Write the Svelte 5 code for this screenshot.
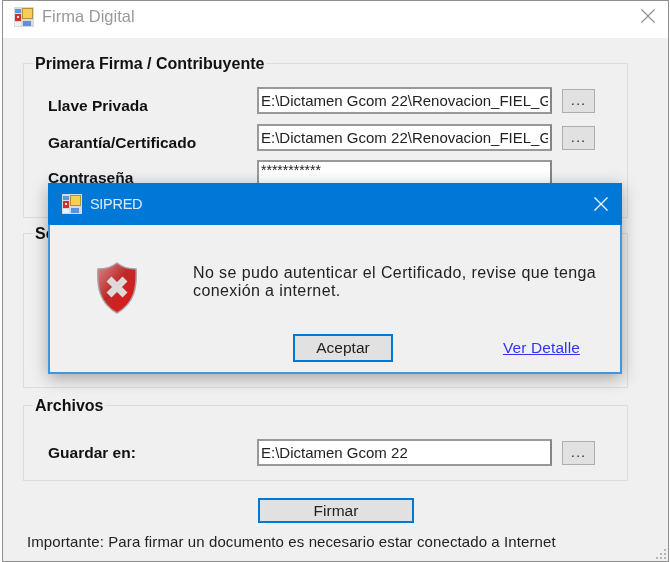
<script lang="ts">
  const basePath = 'E:\\Dictamen Gcom 22';
  const fielPath = basePath + '\\Renovacion_FIEL_Gcom22';

  const firstRows = [
    { label: 'Llave Privada', value: fielPath, browse: true },
    { label: 'Garantía/Certificado', value: fielPath, browse: true },
    { label: 'Contraseña', value: '***********', browse: false },
  ];
</script>

{#snippet appIcon()}
  <svg class="app-icon" viewBox="0 0 20 20" aria-hidden="true">
    <rect x="0" y="0" width="20" height="20" fill="#d5dbe2" />
    <rect x="1" y="2" width="6" height="4" fill="#5b9bd5" />
    <rect x="1" y="7" width="6" height="7" fill="#cf3030" />
    <rect x="3" y="9" width="2" height="2" fill="#f4e3e3" />
    <rect x="8" y="1" width="11" height="11" fill="#b58f3a" />
    <rect x="9" y="2" width="9" height="9" fill="#f8cf55" />
    <rect x="9" y="14" width="8" height="5" fill="#5f8fe0" />
    <rect x="1" y="15" width="6" height="4" fill="#eef1f4" />
  </svg>
{/snippet}

<div class="window">
  <header class="titlebar">
    {@render appIcon()}
    <span class="title">Firma Digital</span>
    <svg class="close" viewBox="0 0 14 14" aria-hidden="true">
      <path d="M0.5 0.5 13.5 13.5M13.5 0.5 0.5 13.5" />
    </svg>
  </header>

  <main class="body">
    <fieldset class="group first">
      <legend>Primera Firma / Contribuyente</legend>
      <div class="rows">
        {#each firstRows as row}
          <label class="name" class:short={!row.browse} for={row.label}>{row.label}</label>
          <input id={row.label} class="field" class:secret={!row.browse} readonly value={row.value} />
          {#if row.browse}
            <button class="browse">...</button>
          {:else}
            <span></span>
          {/if}
        {/each}
      </div>
    </fieldset>

    <fieldset class="group second">
      <legend>Segunda Firma</legend>
    </fieldset>

    <fieldset class="group third">
      <legend>Archivos</legend>
      <div class="rows">
        <label class="name flat" for="guardar">Guardar en:</label>
        <input id="guardar" class="field" readonly value={basePath} />
        <button class="browse">...</button>
      </div>
    </fieldset>

    <button class="primary sign">Firmar</button>
    <p class="note">Importante: Para firmar un documento es necesario estar conectado a Internet</p>
  </main>

  <svg class="grip" viewBox="0 0 12 12" aria-hidden="true">
    <path d="M9 1h2v2H9zM5 5h2v2H5zM9 5h2v2H9zM1 9h2v2H1zM5 9h2v2H5zM9 9h2v2H9z" />
  </svg>

  <section class="dialog">
    <header class="dialog-bar">
      {@render appIcon()}
      <span class="dialog-title">SIPRED</span>
      <svg class="dialog-close" viewBox="0 0 14 14" aria-hidden="true">
        <path d="M0.5 0.5 13.5 13.5M13.5 0.5 0.5 13.5" />
      </svg>
    </header>
    <div class="message">
      <svg class="shield" viewBox="0 0 42 52" aria-hidden="true">
        <defs>
          <linearGradient id="shieldFill" x1="0" y1="0" x2="1" y2="1">
            <stop offset="0" stop-color="#d98c8c" />
            <stop offset="0.45" stop-color="#bd2a2a" />
            <stop offset="0.75" stop-color="#d81c1c" />
            <stop offset="1" stop-color="#861212" />
          </linearGradient>
        </defs>
        <path
          d="M20 1C15 5 8 7 1 7 0 24 2 41 20 51 38 41 40 24 39 7 32 7 25 5 20 1Z"
          fill="url(#shieldFill)"
          stroke="#a9a0a0"
          stroke-width="1.5"
        />
        <path d="M12 17 28 33M28 17 12 33" stroke="#dedada" stroke-width="7" />
      </svg>
      <p class="message-text">No se pudo autenticar el Certificado, revise que tenga conexión a internet.</p>
    </div>
    <div class="actions">
      <button class="primary accept">Aceptar</button>
      <a class="detail" href="#detalle">Ver Detalle</a>
    </div>
  </section>
</div>

<style>
  :global(body) {
    margin: 0;
    background: #fff;
  }

  .window {
    position: relative;
    box-sizing: border-box;
    width: 667px;
    height: 562px;
    margin-left: 2px;
    border: 1px solid #8f8f8f;
    background: #f0f0f0;
    font-family: 'Liberation Sans', Arial, sans-serif;
    font-size: 15.5px;
    color: #222;
    overflow: hidden;
    filter: blur(0.4px);
  }

  .titlebar {
    display: flex;
    align-items: center;
    box-sizing: border-box;
    height: 37px;
    padding: 0 13px 6px 11px;
    background: #fff;
  }

  .app-icon {
    flex: none;
    width: 20px;
    height: 20px;
  }

  .title {
    margin-left: 8px;
    font-size: 16.5px;
    color: #9a9a9a;
  }

  .close {
    width: 14px;
    height: 14px;
    margin: -2px 0 0 auto;
    fill: none;
    stroke: #8c8c8c;
    stroke-width: 1.1;
  }

  .body {
    display: flex;
    flex-direction: column;
    padding: 15px 40px 0 20px;
  }

  .group {
    box-sizing: border-box;
    min-width: 0;
    width: 605px;
    margin: 0;
    padding: 14px 0 0 24px;
    border: 1px solid #dcdcdc;
  }

  .first {
    height: 165px;
  }

  .second {
    height: 165px;
    margin-top: 5px;
  }

  .third {
    height: 86px;
    margin-top: 7px;
    padding-top: 24px;
  }

  legend {
    margin-left: -15px;
    padding: 2px 2px 0;
    font-size: 16px;
    line-height: 18px;
    font-weight: bold;
    color: #111;
  }

  .rows {
    display: grid;
    grid-template-columns: 199px 295px 33px;
    column-gap: 10px;
    row-gap: 10px;
    align-items: center;
  }

  .name {
    margin: 5px 0 -5px;
    line-height: 18px;
    font-weight: bold;
    color: #111;
  }

  .name.short {
    margin: 3px 0 -3px;
  }

  .name.flat {
    margin: 0;
  }

  .field {
    box-sizing: border-box;
    width: 100%;
    height: 27px;
    padding: 0 2px 1px;
    border: 2px solid #999;
    border-right-color: #858585;
    background: #fff;
    font: 15px/18px 'Liberation Sans', Arial, sans-serif;
    color: #222;
    outline: none;
  }

  .secret {
    height: 28px;
    margin-top: -1px;
    padding-bottom: 9px;
    font-size: 14px;
  }

  .browse {
    box-sizing: border-box;
    height: 24px;
    padding: 0 0 2px;
    border: 1px solid #adadad;
    background: #e1e1e1;
    font: 15px 'Liberation Sans', Arial, sans-serif;
    letter-spacing: 1px;
    color: #333;
  }

  .primary {
    box-sizing: border-box;
    border: 2px solid #0078d7;
    background: #e1e1e1;
    font: 15.5px 'Liberation Sans', Arial, sans-serif;
    color: #222;
  }

  .sign {
    align-self: flex-start;
    width: 156px;
    height: 25px;
    margin: 17px 0 0 235px;
  }

  .note {
    margin: 10px 0 0 4px;
    font-size: 15px;
    line-height: 18px;
    letter-spacing: 0.1px;
    white-space: nowrap;
    color: #222;
  }

  .grip {
    position: absolute;
    right: 1px;
    bottom: 1px;
    width: 12px;
    height: 12px;
    fill: #b5b5b5;
  }

  .dialog {
    position: absolute;
    left: 45px;
    top: 182px;
    box-sizing: border-box;
    width: 574px;
    height: 191px;
    border: 2px solid #3b97e3;
    border-top: none;
    background: #f0f0f0;
    box-shadow: 0 4px 16px rgba(0, 0, 0, 0.32);
  }

  .dialog-bar {
    display: flex;
    align-items: center;
    height: 42px;
    margin: 0 -2px;
    padding: 0 14px 0 14px;
    background: #0078d7;
  }

  .dialog-title {
    margin-left: 8px;
    font-size: 14.5px;
    letter-spacing: -0.3px;
    color: #d8ecfb;
  }

  .dialog-close {
    width: 14px;
    height: 14px;
    margin-left: auto;
    fill: none;
    stroke: #fff;
    stroke-width: 1.2;
  }

  .message {
    display: flex;
    align-items: flex-start;
    padding: 38px 20px 0 47px;
  }

  .shield {
    flex: none;
    width: 42px;
    height: 52px;
    margin-top: -1px;
  }

  .message-text {
    margin: 0 0 0 54px;
    padding-top: 1px;
    width: 420px;
    font-size: 16px;
    line-height: 18px;
    letter-spacing: 0.4px;
    color: #222;
  }

  .actions {
    display: flex;
    align-items: flex-start;
    margin-top: 20px;
    padding-left: 243px;
  }

  .accept {
    width: 100px;
    height: 28px;
  }

  .detail {
    margin: 5px 0 0 110px;
    font-size: 15.5px;
    letter-spacing: 0.1px;
    color: #3333ee;
    text-decoration: underline;
  }
</style>
